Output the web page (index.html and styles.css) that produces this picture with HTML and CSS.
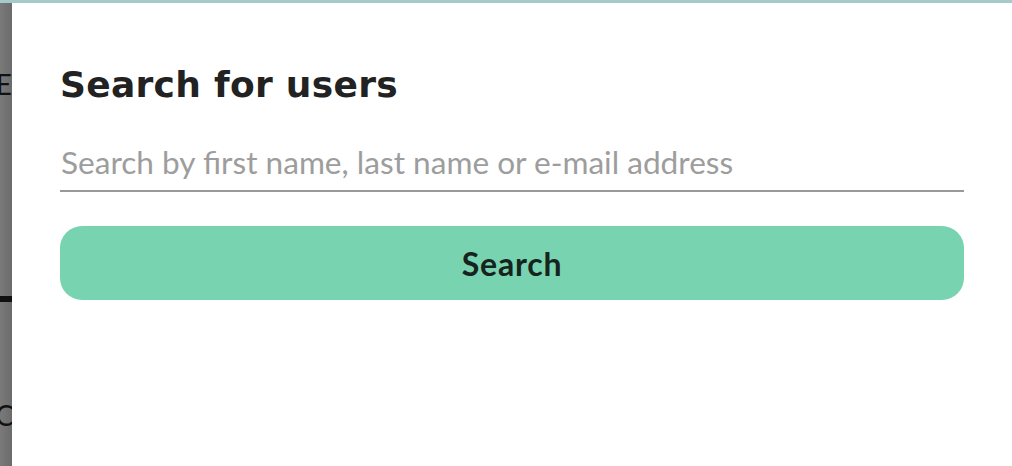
FILE: index.html
```html
<!DOCTYPE html>
<html lang="en">
<head>
    <meta charset="UTF-8">
    <title>Search for users</title>
    <link rel="stylesheet" href="styles.css">
</head>
<body>
    <div class="top-bar"></div>
    <div class="screen">
        <!-- page behind the overlay, mostly hidden by the modal -->
        <div class="backdrop">
            <div class="backdrop-letter letter-e">E</div>
            <div class="backdrop-rule"></div>
            <div class="backdrop-letter letter-c">C</div>
        </div>

        <div class="modal">
            <h1 class="modal-title">Search for users</h1>
            <form class="search-form" onsubmit="return false">
                <input class="search-input" type="text" placeholder="Search by first name, last name or e-mail address">
                <button class="btn-search" type="submit">Search</button>
            </form>
        </div>
    </div>
</body>
</html>
```

FILE: styles.css
```css
* {
    margin: 0;
    padding: 0;
    box-sizing: border-box;
}

html, body {
    height: 100%;
}

body {
    font-family: 'Lato', 'Liberation Sans', sans-serif;
    background: #6f6f6f;
    display: flex;
    flex-direction: column;
    overflow: hidden;
}

.top-bar {
    height: 3px;
    background: #a6c9cb;
    flex-shrink: 0;
}

.screen {
    flex: 1;
    display: flex;
}

.backdrop {
    width: 12px;
    flex-shrink: 0;
    overflow: hidden;
    display: flex;
    flex-direction: column;
    background: linear-gradient(90deg, #7a7a7a 0%, #6b6b6b 100%);
}

.backdrop-letter {
    font-family: 'Lato', sans-serif;
    font-size: 28px;
    color: #111;
    text-align: right;
    white-space: nowrap;
    line-height: 1;
    direction: rtl;
}

.letter-e {
    margin-top: 67px;
}

.backdrop-rule {
    height: 6px;
    background: #111;
    margin-top: 198px;
}

.letter-c {
    margin-top: 99px;
    margin-right: -2px;
}

.modal {
    flex: 1;
    background: #fff;
    padding: 58px 48px 0 48px;
}

.modal-title {
    font-family: 'DejaVu Sans', 'Inter', sans-serif;
    font-size: 36px;
    font-weight: 700;
    color: #222;
    letter-spacing: 0.3px;
    line-height: 48px;
}

.search-form {
    display: flex;
    flex-direction: column;
    margin-top: 34px;
}

.search-input {
    font-family: 'Lato', sans-serif;
    font-size: 31.6px;
    color: #333;
    border: none;
    border-bottom: 2px solid #999;
    padding: 0 0 9px 1px;
    outline: none;
    background: transparent;
}

.search-input::placeholder {
    color: #9d9d9d;
}

.btn-search {
    margin-top: 34px;
    height: 74px;
    border: none;
    border-radius: 22px;
    background: #78d4b0;
    color: #17231d;
    font-family: 'Lato', sans-serif;
    font-size: 32px;
    font-weight: 700;
    letter-spacing: 0.8px;
    cursor: pointer;
}
```
